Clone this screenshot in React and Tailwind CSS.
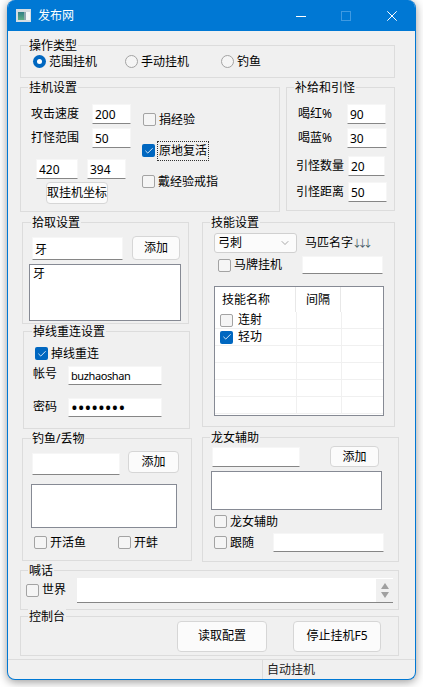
import React from 'react';
import { ChevronDown, Check } from 'lucide-react';

const Group = ({ title, labelClass = 'left-[7px]', className = '', children }) => (
    <div className={`relative border border-[#dcdcdc] ${className}`}>
        <span className={`absolute -top-[8px] bg-[#f0f0f0] px-[1px] leading-[15px] ${labelClass}`}>{title}</span>
        {children}
    </div>
);

const Field = ({ value = '', type = 'text', className = '' }) => (
    <input
        readOnly
        type={type}
        value={value}
        className={`block bg-white border border-[#f6f6f6] border-b-[#868686] pl-[2px] outline-none text-black ${className}`}
    />
);

const Btn = ({ children, className = '' }) => (
    <div className={`flex items-center justify-center bg-[#fbfbfb] border border-[#d6d6d6] rounded-[4px] ${className}`}>{children}</div>
);

const Cb = ({ checked = false }) =>
    checked ? (
        <span className="flex items-center justify-center w-[13px] h-[13px] shrink-0 rounded-[2px] bg-[#0067c0]">
            <Check size={10} strokeWidth={2} className="text-white" />
        </span>
    ) : (
        <span className="block w-[13px] h-[13px] shrink-0 rounded-[2px] border border-[#a3a3a3] bg-[#f5f5f5]" />
    );

const CheckRow = ({ label, checked, className = '', labelClass = '' }) => (
    <div className={`flex items-center gap-[3px] h-[15px] ${className}`}>
        <Cb checked={checked} />
        <span className={labelClass}>{label}</span>
    </div>
);

const Radio = ({ label, selected, className = '' }) => (
    <div className={`flex items-center gap-[3px] ${className}`}>
        {selected ? (
            <span className="flex items-center justify-center w-[13px] h-[13px] rounded-full bg-[#0067c0]">
                <span className="block w-[5px] h-[5px] rounded-full bg-white" />
            </span>
        ) : (
            <span className="block w-[13px] h-[13px] rounded-full border border-[#a3a3a3] bg-[#f5f5f5]" />
        )}
        <span>{label}</span>
    </div>
);

const ListBox = ({ className = '', children }) => (
    <div className={`bg-white border border-[#868a94] ${className}`}>{children}</div>
);

const skillRows = [
    { name: '连射', checked: false },
    { name: '轻功', checked: true },
    { name: '' },
    { name: '' },
    { name: '' },
    { name: '' },
];

const App = () => {
    return (
        <div className="w-[423px] h-[687px] bg-white pl-[7px] overflow-hidden text-[12px] text-black font-['Noto_Sans','Noto_Sans_CJK_SC',sans-serif]">
            <div className="flex flex-col w-[409px] h-[680px] bg-[#f0f0f0] border border-t-0 border-[#0078d4] rounded-lg overflow-hidden shadow-[0_2px_10px_rgba(0,0,0,0.4)]">
                {/* title bar */}
                <div className="flex items-center h-[31px] shrink-0 bg-[#0078d4] text-white">
                    <svg width="15" height="13" viewBox="0 0 15 13" className="ml-[8px] shrink-0">
                        <defs>
                            <linearGradient id="pane" x1="0" y1="0" x2="0" y2="1">
                                <stop offset="0" stopColor="#2f7f86" />
                                <stop offset="1" stopColor="#5fae84" />
                            </linearGradient>
                        </defs>
                        <rect width="15" height="13" fill="#d5dde2" />
                        <rect x="2" y="3" width="6" height="8" fill="url(#pane)" />
                        <rect x="8" y="3" width="2" height="8" fill="#8fa9b0" />
                        <rect x="10" y="3" width="4" height="8" fill="#f4f7f7" />
                    </svg>
                    <span className="ml-[7px]">发布网</span>
                    <svg width="10" height="10" viewBox="0 0 10 10" className="ml-[222px] shrink-0">
                        <path d="M0 5.5H10" stroke="#ffffff" strokeWidth="1" />
                    </svg>
                    <svg width="10" height="10" viewBox="0 0 10 10" className="ml-[35px] shrink-0">
                        <rect x="0.5" y="0.5" width="9" height="9" fill="none" stroke="#3f9ae2" strokeWidth="1" />
                    </svg>
                    <svg width="10" height="10" viewBox="0 0 10 10" className="ml-[36px] shrink-0">
                        <path d="M0.3 0.3L9.7 9.7M9.7 0.3L0.3 9.7" stroke="#ffffff" strokeWidth="1" />
                    </svg>
                </div>

                <div className="flex flex-col flex-1 pl-[12px] pt-[14px]">
                    {/* 操作类型 */}
                    <Group title="操作类型" className="flex items-center w-[375px] h-[33px] pl-[12px]">
                        <Radio label="范围挂机" selected className="w-[92px]" />
                        <Radio label="手动挂机" className="w-[96px]" />
                        <Radio label="钓鱼" />
                    </Group>

                    <div className="flex gap-[6px] mt-[9px]">
                        {/* 挂机设置 */}
                        <Group title="挂机设置" className="flex w-[260px] h-[125px] pl-[10px] pt-[16px]">
                            <div className="w-[100px]">
                                <div className="flex items-center justify-between h-[20px]">
                                    <span>攻击速度</span>
                                    <Field value="200" className="w-[39px] h-[20px]" />
                                </div>
                                <div className="flex items-center justify-between h-[20px] mt-[4px]">
                                    <span>打怪范围</span>
                                    <Field value="50" className="w-[39px] h-[20px]" />
                                </div>
                                <div className="flex gap-[9px] ml-[5px] mt-[11px]">
                                    <Field value="420" className="w-[42px] h-[20px]" />
                                    <Field value="394" className="w-[39px] h-[20px]" />
                                </div>
                                <Btn className="w-[62px] h-[22px] ml-[15px] mt-[3px]">取挂机坐标</Btn>
                            </div>
                            <div className="flex flex-col gap-[16px] ml-[11px] pt-[8px]">
                                <CheckRow label="捐经验" className="ml-[1px]" />
                                <CheckRow checked label="原地复活" className="gap-[2px]" labelClass="outline outline-1 outline-dotted outline-[#333333] px-[1px]" />
                                <CheckRow label="戴经验戒指" />
                            </div>
                        </Group>

                        {/* 补给和引怪 */}
                        <Group title="补给和引怪" className="w-[109px] h-[124px] pt-[16px]">
                            <div className="flex items-center h-[20px] pl-[11px]">
                                <span className="w-[49px]">喝红%</span>
                                <Field value="90" className="w-[39px] h-[20px]" />
                            </div>
                            <div className="flex items-center h-[20px] mt-[4px] pl-[11px]">
                                <span className="w-[49px]">喝蓝%</span>
                                <Field value="30" className="w-[40px] h-[20px]" />
                            </div>
                            <div className="flex items-center h-[20px] mt-[8px] pl-[9px]">
                                <span className="w-[52px]">引怪数量</span>
                                <Field value="20" className="w-[37px] h-[20px]" />
                            </div>
                            <div className="flex items-center h-[20px] mt-[6px] pl-[9px]">
                                <span className="w-[52px]">引怪距离</span>
                                <Field value="50" className="w-[39px] h-[20px]" />
                            </div>
                        </Group>
                    </div>

                    <div className="flex mt-[10px]">
                        <div className="w-[182px] shrink-0">
                            {/* 拾取设置 */}
                            <Group title="拾取设置" labelClass="left-[8px]" className="w-[167px] h-[102px] ml-[2px] pt-[13px]">
                                <div className="flex items-start">
                                    <Field value="牙" className="w-[91px] h-[23px] ml-[9px] mt-[1px]" />
                                    <Btn className="w-[48px] h-[24px] ml-[9px]">添加</Btn>
                                </div>
                                <ListBox className="w-[152px] h-[57px] ml-[6px] mt-[4px] pl-[3px] leading-[16px] pt-[1px]">牙</ListBox>
                            </Group>

                            {/* 掉线重连设置 */}
                            <Group title="掉线重连设置" labelClass="left-[8px]" className="w-[167px] h-[98px] ml-[3px] mt-[7px] pt-[14px]">
                                <CheckRow checked label="掉线重连" className="ml-[11px]" />
                                <div className="flex items-center h-[19px] mt-[5px] ml-[9px]">
                                    <span className="w-[35px] -mt-[4px]">帐号</span>
                                    <Field value="buzhaoshan" className="w-[94px] h-[19px] text-[11px] tracking-[-0.4px]" />
                                </div>
                                <div className="flex items-center h-[19px] mt-[13px] ml-[9px]">
                                    <span className="w-[35px] -mt-[1px]">密码</span>
                                    <Field value="12345678" type="password" className="w-[94px] h-[19px] text-[18px]" />
                                </div>
                            </Group>

                            {/* 钓鱼/丢物 */}
                            <Group title="钓鱼/丢物" labelClass="left-[8px]" className="w-[170px] h-[123px] ml-[2px] mt-[9px] pt-[12px]">
                                <div className="flex items-start">
                                    <Field className="w-[88px] h-[22px] ml-[9px] mt-[2px]" />
                                    <Btn className="w-[51px] h-[22px] ml-[8px]">添加</Btn>
                                </div>
                                <ListBox className="w-[146px] h-[44px] ml-[8px] mt-[9px]" />
                                <div className="flex mt-[7px] ml-[11px]">
                                    <CheckRow label="开活鱼" className="w-[84px]" />
                                    <CheckRow label="开蚌" />
                                </div>
                            </Group>
                        </div>

                        <div className="w-[197px] shrink-0">
                            {/* 技能设置 */}
                            <Group title="技能设置" labelClass="left-[7px]" className="w-[193px] h-[205px] pl-[9px] pt-[10px]">
                                <div className="flex items-center">
                                    <div className="flex items-center justify-between w-[83px] h-[20px] ml-[2px] pl-[3px] pr-[5px] bg-[#fbfbfb] border border-[#d0d0d0] rounded-[3px]">
                                        <span>弓刺</span>
                                        <ChevronDown size={12} strokeWidth={1} className="text-[#555555]" />
                                    </div>
                                    <span className="ml-[8px]">马匹名字</span>
                                    <span className="text-[#3d5560] text-[10px] tracking-[-4.5px] -ml-[1px]">↓↓↓</span>
                                </div>
                                <div className="flex items-center mt-[3px]">
                                    <CheckRow label="马牌挂机" className="w-[84px] ml-[6px]" />
                                    <Field className="w-[81px] h-[18px]" />
                                </div>
                                <ListBox className="w-[170px] h-[130px] ml-[2px] mt-[12px] flex flex-col overflow-hidden">
                                    <div className="flex h-[25px] shrink-0">
                                        <div className="flex items-center w-[81px] pl-[7px] border-r border-[#e8e8e8]">技能名称</div>
                                        <div className="flex items-center w-[45px] pl-[10px] border-r border-[#e8e8e8]">间隔</div>
                                    </div>
                                    {skillRows.map((row, i) => (
                                        <div key={i} className="flex h-[17px] shrink-0 border-b border-[#f0f0f0]">
                                            <div className="flex items-center w-[82px] pl-[5px] gap-[5px] border-r border-[#f0f0f0]">
                                                {row.name && <Cb checked={row.checked} />}
                                                <span>{row.name}</span>
                                            </div>
                                            <div className="w-[45px] border-r border-[#f0f0f0]" />
                                        </div>
                                    ))}
                                </ListBox>
                            </Group>

                            {/* 龙女辅助 */}
                            <Group title="龙女辅助" labelClass="left-[7px]" className="w-[197px] h-[125px] mt-[10px] pt-[9px]">
                                <div className="flex items-start">
                                    <Field className="w-[88px] h-[20px] ml-[9px]" />
                                    <Btn className="w-[49px] h-[21px] ml-[30px] -mt-[1px]">添加</Btn>
                                </div>
                                <ListBox className="w-[171px] h-[39px] ml-[8px] mt-[4px]" />
                                <CheckRow label="龙女辅助" className="ml-[11px] mt-[4px] gap-[2px]" />
                                <div className="flex items-center mt-[4px] ml-[11px]">
                                    <CheckRow label="跟随" className="w-[59px] gap-[2px]" />
                                    <Field className="w-[111px] h-[19px]" />
                                </div>
                            </Group>
                        </div>
                    </div>

                    {/* 喊话 */}
                    <Group title="喊话" labelClass="left-[7px]" className="flex items-center w-[379px] h-[40px] mt-[8px] pl-[5px]">
                        <CheckRow label="世界" className="w-[51px]" />
                        <div className="flex justify-end w-[316px] h-[25px] bg-white border-b border-[#868686]">
                            <div className="flex flex-col items-center justify-center gap-[3px] w-[17px] h-[23px] mt-[1px] bg-[#f0f0f0]">
                                <span className="block w-0 h-0 border-x-[4px] border-x-transparent border-b-[6px] border-b-[#a0a0a0]" />
                                <span className="block w-0 h-0 border-x-[4px] border-x-transparent border-t-[6px] border-t-[#a0a0a0]" />
                            </div>
                        </div>
                    </Group>

                    {/* 控制台 */}
                    <Group title="控制台" labelClass="left-[7px]" className="flex items-center w-[379px] h-[40px] mt-[6px] pl-[156px]">
                        <Btn className="w-[90px] h-[31px]">读取配置</Btn>
                        <Btn className="w-[88px] h-[31px] ml-[26px]">停止挂机F5</Btn>
                    </Group>
                </div>

                {/* status bar */}
                <div className="flex items-center h-[20px] shrink-0 border-t border-[#dcdcdc]">
                    <div className="w-[255px] h-full border-r border-[#dcdcdc]" />
                    <span className="ml-[4px] text-[#222222]">自动挂机</span>
                </div>
            </div>
        </div>
    );
};

export default App;
